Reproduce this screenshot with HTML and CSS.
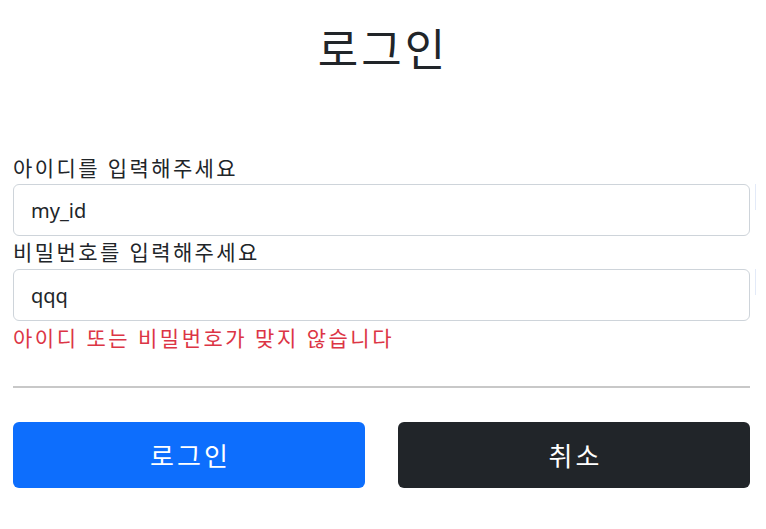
FILE: index.html
```html
<!DOCTYPE html>
<html lang="ko">
<head>
  <meta charset="UTF-8">
  <title>로그인</title>
  <link rel="stylesheet" href="styles.css">
</head>
<body>
  <div class="container">
    <h2 class="title">로그인</h2>

    <form class="loginForm">
      <label for="loginId" class="first">아이디를 입력해주세요</label>
      <div class="fieldWrap">
        <input type="text" id="loginId" class="field" value="my_id">
      </div>

      <label for="password">비밀번호를 입력해주세요</label>
      <div class="fieldWrap">
        <input type="text" id="password" class="field" value="qqq">
      </div>

      <div class="errorText">아이디 또는 비밀번호가 맞지 않습니다</div>

      <hr class="divider">

      <div class="actions">
        <button type="submit" class="btn btnPrimary">로그인</button>
        <button type="button" class="btn btnDark">취소</button>
      </div>
    </form>
  </div>
</body>
</html>
```

FILE: styles.css
```css
* { box-sizing: border-box; }
body {
  margin: 0;
  background: #fff;
  color: #212529;
  font-family: "Noto Sans", "Noto Sans CJK KR", sans-serif;
  font-size: 20px;
}
.container {
  width: 737px;
  margin-left: 13px;
}
.title {
  margin: 19px 0 0;
  height: 135px;
  text-align: center;
  font-size: 44px;
  font-weight: 400;
  line-height: 60px;
  letter-spacing: 3px;
  text-indent: 3px;
}
.loginForm label {
  display: block;
  height: 33px;
  line-height: 33px;
  font-size: 21px;
  letter-spacing: 2.4px;
}
.loginForm label.first {
  margin-top: -8px;
  height: 38px;
  line-height: 44px;
}
.fieldWrap {
  position: relative;
}
/* faint marker just right of each field */
.fieldWrap::after {
  content: "";
  position: absolute;
  top: 0;
  right: -6px;
  width: 1px;
  height: 26px;
  background: #e3eaf8;
}
.field {
  display: block;
  width: 100%;
  height: 52px;
  padding: 0 17px;
  font-family: "Noto Sans", "Noto Sans CJK KR", sans-serif;
  font-size: 20px;
  color: #212529;
  border: 1px solid #ced4da;
  border-radius: 6px;
  outline: none;
}
.errorText {
  height: 33px;
  line-height: 34px;
  color: #dc3545;
  font-size: 21px;
  letter-spacing: 2.5px;
}
.divider {
  margin: 32px 0 34px;
  border: none;
  border-top: 2px solid #c8c8c8;
}
.actions {
  display: flex;
  gap: 33px;
}
.btn {
  flex: 1;
  height: 66px;
  border: none;
  border-radius: 6px;
  color: #fff;
  font-family: "Noto Sans", "Noto Sans CJK KR", sans-serif;
  font-size: 26px;
  letter-spacing: 3px;
  text-indent: 3px;
  cursor: pointer;
}
.btnPrimary { background: #0d6efd; }
.btnDark { background: #212529; }
```
